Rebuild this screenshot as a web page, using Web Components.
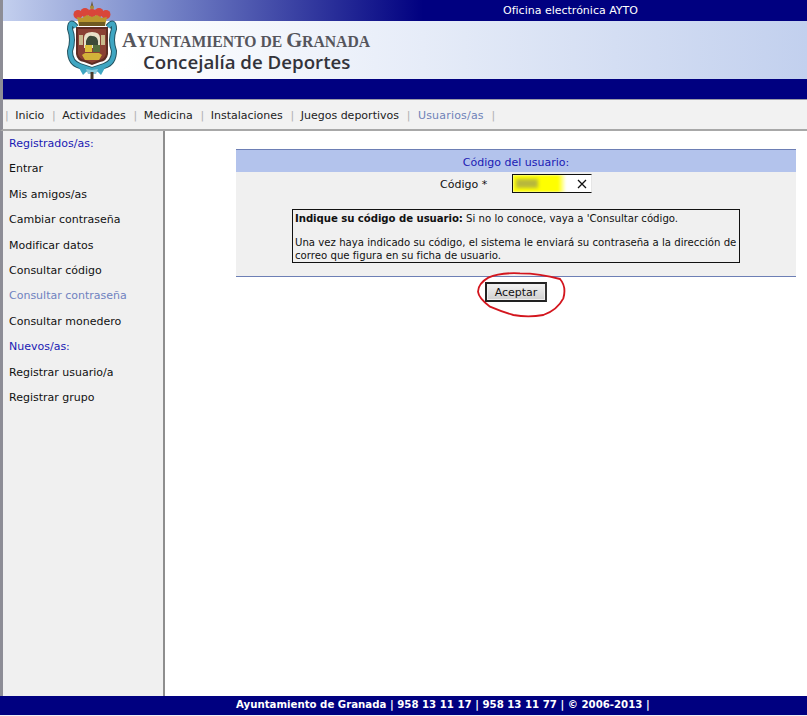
<!DOCTYPE html>
<html lang="es"><head><meta charset="utf-8"><title>Oficina electrónica</title>
<style>
html,body{margin:0;padding:0;height:716px;overflow:hidden;background:#fff}
body{font:11px "DejaVu Sans",Verdana,sans-serif;color:#111}
gr-page{display:flex;flex-direction:column;height:716px}
</style></head><body>
<gr-page>
<gr-header></gr-header>
<gr-nav active="Usuarios/as">Inicio|Actividades|Medicina|Instalaciones|Juegos deportivos|Usuarios/as</gr-nav>
<gr-main>
<gr-side></gr-side>
<gr-form></gr-form>
</gr-main>
<gr-foot></gr-foot>
</gr-page>
<script>
function def(name,html){customElements.define(name,class extends HTMLElement{constructor(){super();this.attachShadow({mode:'open'}).innerHTML=html(this)}})}
def('gr-page',()=>`<style>:host{display:flex;flex-direction:column;height:716px}</style><slot></slot>`);
def('gr-main',()=>`<style>:host{display:flex;flex:1;min-height:0}</style><slot></slot>`);
def('gr-header',()=>`<style>
:host{display:block;position:relative;height:99px;border-left:3px solid #8d8d96;box-sizing:border-box}
.top{height:21px;background:linear-gradient(90deg,#c3cfee 0,#7f8fcd 140px,#000080 420px);color:#fff;font:11px "DejaVu Sans",sans-serif;padding:1px 0 0 500px;box-sizing:border-box;line-height:20px}
.brand{height:58px;background:linear-gradient(90deg,#fff 0,#fff 120px,#e6ecf8 420px,#c2d0ee 100%);padding:9px 0 0 119px;box-sizing:border-box}
.a{font:bold 15.7px/20px "Liberation Serif",serif;text-transform:uppercase;color:#55555c;white-space:nowrap}
.a span{font-size:20.5px}
.b{font:600 18.7px/19px "Open Sans","Liberation Sans",sans-serif;color:#33333a;padding-left:21px;white-space:nowrap}
.bar{height:20px;background:#000080}
svg{position:absolute;left:64px;top:1px}
</style>
<div class="top">Oficina electrónica AYTO</div>
<div class="brand"><div class="a"><span>A</span>yuntamiento de <span>G</span>ranada</div><div class="b">Concejalía de Deportes</div></div>
<div class="bar"></div>
<svg width="52" height="78" viewBox="0 0 52 78" aria-hidden="true">
<path d="M25 0l1.500 6h-3z" fill="#6b5a38"/><circle cx="25" cy="6.500" r="2" fill="#a88c3a"/>
<g fill="#d9463a"><circle cx="11" cy="13.500" r="4.500"/><circle cx="18" cy="11.500" r="4.500"/><circle cx="25" cy="12" r="4"/><circle cx="32" cy="11.500" r="4.500"/><circle cx="39" cy="13.500" r="4.500"/></g>
<path d="M10 16l5 1 5-3 5 2 5-2 5 3 5-1-2 9H12z" fill="#b9982f"/>
<rect x="12" y="21" width="26" height="4" fill="#6f5a22"/>
<path d="M9 26Q3 18 3 28q4 11 0 22 0 12 10 15l12 4 12-4q10-3 10-15-4-11 0-22 0-10-6-2" fill="none" stroke="#24525f" stroke-width="6"/>
<path d="M9 26Q3 18 3 28q4 11 0 22 0 12 10 15l12 4 12-4q10-3 10-15-4-11 0-22 0-10-6-2" fill="none" stroke="#3fa6c2" stroke-width="4"/>
<path d="M9 26h32v27q-1 7-8 8l-8 3-8-3q-7-1-8-8z" fill="#5e2c24"/>
<path d="M11 28h28v25q-1 5-7 6l-7 3-7-3q-6-1-7-6z" fill="#8a4034"/>
<path d="M17 47V37q0-6 8-6t8 6v10z" fill="#e8e0c8"/>
<path d="M19 40q2-6 6-5 5 0 6 5v4H19z" fill="#3c4a38"/>
<rect x="18" y="44" width="7" height="7" fill="#dcc03a"/><rect x="26" y="44" width="7" height="7" fill="#56703f"/>
<rect x="12" y="34" width="4" height="10" fill="#c9b98c"/><rect x="34" y="34" width="4" height="10" fill="#c9b98c"/>
<path d="M15 54l3-2h14l3 2-3 5H18z" fill="#d2b23a"/>
<path d="M11 65l11 3-6 6zM39 65l-11 3 6 6z" fill="#3fa6c2"/><path d="M19 68l6 1 6-1-2 5h-8z" fill="#8cc9da"/>
<rect x="23.500" y="71" width="3" height="7" fill="#4a3a28"/>
</svg>`);
def('gr-nav',h=>{const items=h.textContent.trim().split('|'),act=h.getAttribute('active');
return `<style>
:host{display:flex;align-items:center;height:32px;box-sizing:border-box;background:#f2f2f2;border-top:1px solid #9a9aa6;border-bottom:2px solid #a8a8a8;border-left:3px solid #8d8d96;font-size:11px;line-height:31px;color:#222;padding:1px 0 0 2px;white-space:nowrap}
i{font-style:normal;color:#b0b0b0;margin:0 6.500px 0 0}
span{margin-right:7.700px}
.on{color:#6f82b8;letter-spacing:.2px;margin-left:1px}
</style><i>|</i>${items.map(t=>`<span class="${t===act?'on':''}">${t}</span><i>|</i>`).join('')}`});
def('gr-side',()=>`<style>
:host{display:block;width:165px;flex:none;box-sizing:border-box;background:#f0f0f0;border-left:3px solid #8d8d96;border-right:2px solid #8e8e8e;padding:0 0 0 6px;font-size:11px}
div{height:25.4px;line-height:25px;white-space:nowrap}
.h{color:#1a1ab4}.on{color:#6f82c0}
</style>
<div class="h">Registrados/as:</div><div>Entrar</div><div>Mis amigos/as</div><div>Cambiar contraseña</div><div>Modificar datos</div><div>Consultar código</div><div class="on">Consultar contraseña</div><div>Consultar monedero</div><div class="h">Nuevos/as:</div><div>Registrar usuario/a</div><div>Registrar grupo</div>`);
def('gr-form',()=>`<style>
:host{display:block;flex:1;position:relative;padding:18px 11px 0 71px;font-size:11px}
.box{background:#f0f0f0;border-top:1px solid #6d7fb5;border-bottom:1px solid #6d7fb5;height:128px;box-sizing:border-box}
.t{height:22px;background:#b3c3ec;color:#1a1ab4;font-size:11px;line-height:25px;text-align:center}
.row{height:23px;display:flex;align-items:center;font-size:11px;padding-left:204px}
.lab{width:72px;padding-top:1px}
.inp{width:80px;height:19px;box-sizing:border-box;border:1px solid #111;border-right-color:#e6e6e6;background:#fff;display:flex;align-items:center;position:relative;overflow:hidden}
.y{width:53px;height:17px;background:linear-gradient(90deg,#ffff00 85%,#fff);position:relative;filter:blur(1px)}
.y:after{content:"";position:absolute;left:3px;top:4px;width:22px;height:9px;background:#b8b83c;filter:blur(1.500px)}
.inp svg{margin-left:11px}
.note{margin:14px 56px 0 56px;border:1px solid #111;padding:2px 0 0 2px;height:54px;box-sizing:border-box;line-height:13px;font-size:10.17px;color:#111;white-space:nowrap}
.note p{margin:0 0 11px}
.note b{letter-spacing:-.06px}
.act{display:flex;justify-content:center;padding-top:5px}
button{width:62px;height:20px;font:11px "DejaVu Sans",sans-serif;background:linear-gradient(#f2f2f2,#cfcfcf);border:2px solid #222;border-right-color:#333;color:#111;padding:0;box-shadow:inset 0 0 0 1px #eee}
.ring{position:absolute;left:305px;top:134px}
</style>
<div class="box">
<div class="t">Código del usuario:</div>
<div class="row"><span class="lab">Código *</span><div class="inp"><div class="y"></div><svg width="10" height="10" viewBox="0 0 10 10"><path d="M1 1l8 8M9 1l-8 8" stroke="#111" stroke-width="1.300" fill="none"/></svg></div></div>
<div class="note"><p><b>Indique su código de usuario:</b> Si no lo conoce, vaya a 'Consultar código.</p>Una vez haya indicado su código, el sistema le enviará su contraseña a la dirección de<br>correo que figura en su ficha de usuario.</div>
</div>
<div class="act"><button>Aceptar</button></div>
<svg class="ring" width="110" height="60" viewBox="0 0 330 180" aria-hidden="true"><path d="M270 42Q210 25 150 25 90 22 55 38 25 55 24 80 26 100 60 125 95 140 130 150 175 158 220 150 262 135 280 100 290 65 270 42" fill="none" stroke="#d3161e" stroke-width="5.500" stroke-linecap="round"/></svg>`);
def('gr-foot',()=>`<style>
:host{display:block;height:20px;background:#eef0f6}
div{height:19px;background:#000080;color:#fff;font:bold 10.2px/18px "DejaVu Sans",sans-serif;padding-left:236px;white-space:nowrap}
</style><div>Ayuntamiento de Granada | 958 13 11 17 | 958 13 11 77 | © 2006-2013 |</div>`);
</script>
</body></html>
